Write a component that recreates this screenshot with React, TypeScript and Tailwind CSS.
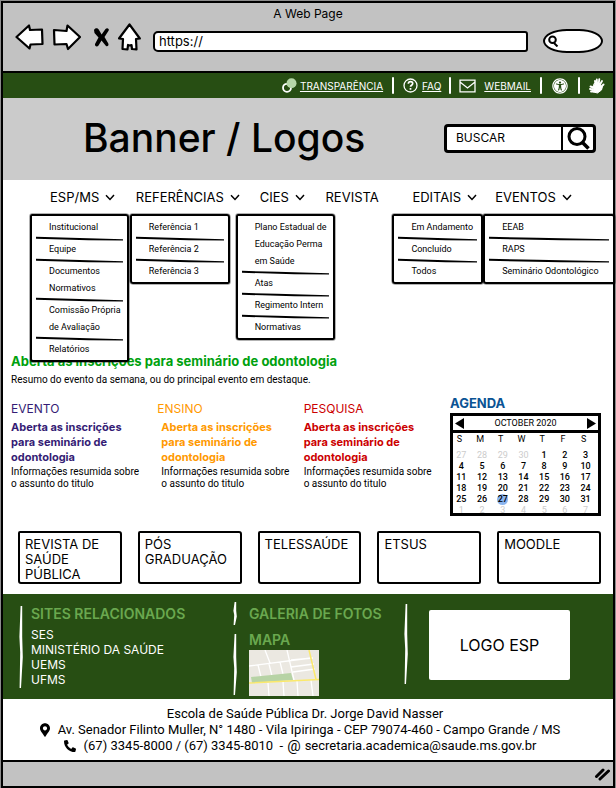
import React from "react";
import { FaMapMarkerAlt, FaPhoneAlt, FaUniversalAccess } from "react-icons/fa";

type Menu = {
  label: string;
  indent: string;
  menuWidth?: string;
  items?: string[][];
};

const menus: Menu[] = [
  {
    label: "ESP/MS",
    indent: "pl-5",
    menuWidth: "w-[99px]",
    items: [
      ["Institucional"],
      ["Equipe"],
      ["Documentos", "Normativos"],
      ["Comissão Própria", "de Avaliação"],
      ["Relatórios"],
    ],
  },
  {
    label: "REFERÊNCIAS",
    indent: "pl-1.5",
    menuWidth: "w-[100px]",
    items: [["Referência 1"], ["Referência 2"], ["Referência 3"]],
  },
  {
    label: "CIES",
    indent: "pl-6",
    menuWidth: "w-[99px]",
    items: [
      ["Plano Estadual de", "Educação Perma", "em Saúde"],
      ["Atas"],
      ["Regimento Intern"],
      ["Normativas"],
    ],
  },
  { label: "REVISTA", indent: "pl-0" },
  {
    label: "EDITAIS",
    indent: "pl-5",
    menuWidth: "w-[91px]",
    items: [["Em Andamento"], ["Concluído"], ["Todos"]],
  },
  {
    label: "EVENTOS",
    indent: "pl-3",
    menuWidth: "w-[132px]",
    items: [["EEAB"], ["RAPS"], ["Seminário Odontológico"]],
  },
];

const news = [
  { tag: "EVENTO", color: "text-[#351c75]", inset: "" },
  { tag: "ENSINO", color: "text-[#ff9900]", inset: "pl-1" },
  { tag: "PESQUISA", color: "text-[#cc0000]", inset: "" },
];

const weeks = [
  [27, 28, 29, 30, 1, 2, 3],
  [4, 5, 6, 7, 8, 9, 10],
  [11, 12, 13, 14, 15, 16, 17],
  [18, 19, 20, 21, 22, 23, 24],
  [25, 26, 27, 28, 29, 30, 31],
  [1, 2, 3, 4, 5, 6, 7],
];

const shortcuts = ["REVISTA DE SAÚDE PÚBLICA", "PÓS GRADUAÇÃO", "TELESSAÚDE", "ETSUS", "MOODLE"];

const sites = ["SES", "MINISTÉRIO DA SAÚDE", "UEMS", "UFMS"];

function Chevron() {
  return (
    <svg viewBox="0 0 10 7" className="h-[7px] w-2.5" fill="none" stroke="black" strokeWidth="1.5" aria-hidden>
      <path d="M1 1.2 5 5.4 9 1" />
    </svg>
  );
}

function MenuRule() {
  return (
    <svg viewBox="0 0 100 5" preserveAspectRatio="none" className="mx-1 block h-[5px] w-[calc(100%-8px)]" aria-hidden>
      <path d="M0 .8 40 1.800 100 3.200 100 4.600 60 4.200 0 2.8Z" fill="black" />
    </svg>
  );
}

function Stroke({ className }: { className: string }) {
  return (
    <svg viewBox="0 0 4 80" preserveAspectRatio="none" className={`block w-1 shrink-0 ${className}`} aria-hidden>
      <path d="M1.600 0 3.2 0 3.200 30 3.8 50 2 80 .6 80 1.2 45 .4 30Z" fill="white" />
    </svg>
  );
}

function Divider() {
  return <span className="h-[17px] w-0.5 shrink-0 rounded-full bg-white" />;
}

function BrowserBar() {
  return (
    <header className="flex h-[70px] flex-col border-b-2 border-black bg-[#c2c2c2]">
      <div className="mt-[3px] h-4 text-center text-[12px] leading-4">A Web Page</div>
      <div className="flex h-[30px] items-center pr-2.5 pl-3">
        <button type="button" aria-label="Voltar">
          <svg viewBox="0 0 29 28" className="h-7 w-[29px]" fill="white" stroke="black" strokeWidth="2.200" strokeLinejoin="round">
            <path d="M1.500 14 14 2.500l1 4.500 12-.5.5 14.500-12 .5-1 4Z" />
          </svg>
        </button>
        <button type="button" aria-label="Avançar" className="ml-2">
          <svg viewBox="0 0 29 28" className="h-7 w-[29px]" fill="white" stroke="black" strokeWidth="2.200" strokeLinejoin="round">
            <path d="M2 7 14.500 8 15.500 2.500 28 14 16 26l-1.500-5-12 .5Z" />
          </svg>
        </button>
        <button type="button" aria-label="Parar" className="ml-3">
          <svg viewBox="0 0 17 21" className="h-[21px] w-[17px]" fill="black">
            <path d="M1 3C2 .8 5 .8 6 3l2.600 4.500L12.500 2c1.500-1.600 4-.4 3.200 1.500L11.500 10l3.800 6.500c.8 2-.8 3.500-2.300 2.500L8.500 13.500 5.500 18.500c-1.200 1.800-4 1-3.500-1.500L5.500 10.500 1.500 6Z" />
          </svg>
        </button>
        <button type="button" aria-label="Início" className="ml-2">
          <svg viewBox="0 0 23 28" className="h-7 w-[23px]" fill="white" stroke="black" strokeWidth="2.200" strokeLinejoin="round">
            <path d="M11.500 1.500 21.800 15.500l-3.800.5.500 10.500-4.500-.5-.5-4-2 .5-1.500-.5-.5 4.500-5-.5.5-10-4-.5Z" />
          </svg>
        </button>
        <input
          aria-label="Endereço"
          defaultValue="https://"
          className="mt-2 ml-3 h-[21px] min-w-0 flex-1 rounded-[5px_3px_3px_5px] border-2 border-black bg-white pl-1 text-[13px] leading-4 outline-none"
        />
        <label className="mt-2 ml-[15px] flex h-6 w-[60px] items-center rounded-[24px/12px] border-2 border-black bg-white pl-0.5">
          <svg viewBox="0 0 12 12" className="h-3 w-3 shrink-0" fill="none" stroke="black" strokeWidth="2" aria-hidden>
            <circle cx="5.500" cy="4.800" r="3.300" />
            <path d="M7 8 10.500 11.500" />
          </svg>
          <input aria-label="Pesquisar na web" className="w-9 bg-transparent text-[11px] outline-none" />
        </label>
      </div>
    </header>
  );
}

function SigningHands() {
  return (
    <svg viewBox="0 0 16 16" className="h-4 w-4" fill="white" stroke="white" strokeLinecap="round" strokeLinejoin="round" aria-hidden>
      <path d="M6.500 6 6 3M8 5 7.800 1.500M9.800 5 10.300 1.200M11.300 6 13 3" strokeWidth="1.900" />
      <path d="M5.500 5.500 11 5.500 11.500 8 6 9.500 4.500 8.500Z" strokeWidth="1" />
      <path d="M4.500 9.500 1.500 8.500M4 11.500 1 11M5 13.500 2 13.500M12.500 8.500 14.500 6.500" strokeWidth="1.900" />
      <path d="M4.500 9 10 7.500 13.500 8.500 12.500 12 8.500 15 4.500 14Z" strokeWidth="1" />
    </svg>
  );
}

function TopLinks() {
  return (
    <div className="flex h-[25px] items-center justify-end bg-[#274e13] pr-2 text-[10px] leading-4 text-white">
      <svg viewBox="0 0 15 15" className="h-[15px] w-[15px]" aria-hidden>
        <circle cx="5" cy="9.800" r="4" fill="none" stroke="white" strokeWidth="1.800" />
        <circle cx="9.500" cy="5.200" r="5" fill="#b6d7a8" />
      </svg>
      <a href="#transparencia" className="mr-[9px] ml-[3px] underline">TRANSPARÊNCIA</a>
      <Divider />
      <svg viewBox="0 0 15 15" className="ml-[9px] h-[15px] w-[15px]" fill="none" stroke="white" strokeWidth="1.300" aria-hidden>
        <circle cx="7.500" cy="7.500" r="6.500" />
        <path d="M5.300 5.800c.2-3 4.400-2.800 4.400-.2 0 1.600-2.200 1.600-2.200 3.200M7.500 10v1.700" strokeWidth="1.700" />
      </svg>
      <a href="#faq" className="mr-2 ml-1 underline">FAQ</a>
      <Divider />
      <svg viewBox="0 0 17 14" className="ml-2 h-3.5 w-[17px]" fill="none" stroke="white" strokeWidth="1.300" aria-hidden>
        <path d="M1 1.200h15v11.600H1ZM1 3l7.500 6L16 3" />
      </svg>
      <a href="#webmail" className="mr-[9px] ml-2 underline">WEBMAIL</a>
      <Divider />
      <a href="#acessibilidade" aria-label="Acessibilidade" className="mx-2.5">
        <FaUniversalAccess className="h-4 w-4" />
      </a>
      <Divider />
      <a href="#libras" aria-label="Libras" className="ml-[9px]">
        <SigningHands />
      </a>
    </div>
  );
}

function Banner() {
  return (
    <div className="flex h-[82px] items-center justify-between bg-[#cbcbcb] pr-[17px] pb-0.5 pl-20">
      <h1 className="text-[39px] leading-[48px] font-medium">Banner / Logos</h1>
      <form className="flex h-[29px] w-[152px] rounded-sm border-[3px] border-black bg-white" onSubmit={(e) => e.preventDefault()}>
        <input
          aria-label="Buscar"
          placeholder="BUSCAR"
          className="min-w-0 flex-1 pl-[9px] text-[12px] leading-4 outline-none placeholder:text-black placeholder:opacity-100"
        />
        <button type="submit" aria-label="Buscar" className="flex w-8 items-center justify-center border-l-2 border-black">
          <svg viewBox="0 0 24 24" className="h-6 w-6" fill="none" stroke="black" strokeWidth="3">
            <circle cx="11" cy="10.500" r="8" />
            <path d="M16.500 16.500 22.500 22.500" strokeWidth="3.500" />
          </svg>
        </button>
      </form>
    </div>
  );
}

function Nav() {
  return (
    <nav className="bg-white pl-[27px]">
      <ul className="grid grid-cols-[100fr_106fr_90fr_67fr_91fr_130fr]">
        {menus.map((m) => (
          <li key={m.label} className="relative min-w-0">
            <button type="button" className={`flex h-[34px] items-center gap-1.5 text-[13px] leading-4 whitespace-nowrap ${m.indent}`}>
              {m.label}
              {m.items && <Chevron />}
            </button>
            {m.items && (
              <ul className={`absolute top-full left-0 z-10 rounded-[2px_3px_2px_3px] border-2 border-black bg-white pt-[3px] pb-0.5 font-[Roboto,sans-serif] outline outline-black/30 ${m.menuWidth}`}>
                {m.items.map((lines, i) => (
                  <li key={lines[0]}>
                    {i > 0 && <MenuRule />}
                    <a href="#menu" className="block pl-[17px] text-[9px] leading-[17px] whitespace-nowrap">
                      {lines.map((line) => (
                        <span key={line} className="block">{line}</span>
                      ))}
                    </a>
                  </li>
                ))}
              </ul>
            )}
          </li>
        ))}
      </ul>
    </nav>
  );
}

function Calendar() {
  return (
    <section className="w-[151px] shrink-0">
      <h2 className="text-[13px] leading-4 font-bold text-[#0b5394]">AGENDA</h2>
      <div className="mt-0.5 h-[103px] overflow-hidden border-[3px] border-black font-[Roboto,sans-serif]">
        <div className="flex h-[17px] items-center justify-between border-b-[3px] border-black px-0.5 text-[9px] leading-3">
          <button type="button" aria-label="Mês anterior">
            <svg viewBox="0 0 9 11" className="h-[11px] w-[9px]"><path d="M9 0v11L0 5.500Z" /></svg>
          </button>
          OCTOBER 2020
          <button type="button" aria-label="Próximo mês">
            <svg viewBox="0 0 9 11" className="h-[11px] w-[9px]"><path d="M0 0v11l9-5.500Z" /></svg>
          </button>
        </div>
        <table className="w-full table-fixed text-center text-[9px] leading-[11px]">
          <thead>
            <tr className="h-[17px] align-top">
              {["S", "M", "T", "W", "T", "F", "S"].map((d, i) => (
                <th key={i} className="pt-px pr-2 font-normal">{d}</th>
              ))}
            </tr>
          </thead>
          <tbody>
            {weeks.map((week, w) => (
              <tr key={w}>
                {week.map((day, d) => {
                  const outside = (w === 0 && day > 20) || w === 5;
                  const today = w === 4 && day === 27;
                  return (
                    <td key={d} className={outside ? "pr-1 text-[#cccccc]" : "pr-1 font-medium"}>
                      <span className={today ? "mx-auto block h-[11px] w-[11px] rounded-full bg-[#8ab4ee]" : "block"}>{day}</span>
                    </td>
                  );
                })}
              </tr>
            ))}
          </tbody>
        </table>
      </div>
    </section>
  );
}

function Content() {
  return (
    <main className="bg-white pt-[139px] pr-3 pb-2.5 pl-2">
      <h2 className="text-[13px] leading-4 font-bold text-[#00a10e]">
        Aberta as inscrições para seminário de odontologia
      </h2>
      <p className="mt-1 font-[Roboto,sans-serif] text-[10px] leading-[14px]">
        Resumo do evento da semana, ou do principal evento em destaque.
      </p>
      <div className="mt-2 flex">
        <div className="grid flex-1 grid-cols-3 pt-1.5">
          {news.map((n) => (
            <article key={n.tag}>
              <h3 className={`text-[12px] leading-4 ${n.color}`}>{n.tag}</h3>
              <div className={`max-w-[136px] ${n.inset}`}>
                <h4 className={`mt-[3px] text-[11px] leading-[15px] font-bold ${n.color}`}>
                  Aberta as inscrições para seminário de odontologia
                </h4>
                <p className="mt-px max-w-[130px] font-[Roboto,sans-serif] text-[10px] leading-3">
                  Informações resumida sobre o assunto do titulo
                </p>
              </div>
            </article>
          ))}
        </div>
        <Calendar />
      </div>
      <ul className="mt-[15px] ml-[7px] grid grid-cols-5 gap-4">
        {shortcuts.map((s) => (
          <li key={s}>
            <a href="#atalho" className="block h-[53px] rounded-[2px_3px_2px_3px] border-2 border-black px-[5px] pt-1 text-[13px] leading-[15px]">
              {s}
            </a>
          </li>
        ))}
      </ul>
    </main>
  );
}

function MapThumb() {
  return (
    <svg viewBox="0 0 70 46" className="h-[46px] w-[70px]" role="img" aria-label="Mapa">
      <rect width="70" height="46" fill="#ebe8e1" />
      <g fill="none" stroke="white" strokeWidth="1.300">
        <path d="M0 16 62 8M16 0l5 13M38 0l7 30M9 15l3 12M20 14l3 12M31 12l3 12M42 10l22-2M42 17l23-3M44 22l22-3M19 33l1 13M34 32l1 14M48 31l1 15M62 30l2 16" />
      </g>
      <path d="M2 27 42 23l2 7-41 3Z" fill="#b7d3a5" />
      <path d="M0 33 70 29.500M60 0l7 29.500" fill="none" stroke="#fbe96b" strokeWidth="1.500" />
    </svg>
  );
}

function Footer() {
  return (
    <footer>
      <div className="flex h-[105px] bg-[#274e13] pr-[43px] pl-4 text-white">
        <Stroke className="mt-3 h-[82px]" />
        <section className="ml-2 w-[200px] pt-3">
          <h2 className="text-[14px] leading-4 font-semibold text-[#6aa84f]">SITES RELACIONADOS</h2>
          <ul className="mt-[5px] text-[12px] leading-[15px]">
            {sites.map((s) => (
              <li key={s}>
                <a href="#site">{s}</a>
              </li>
            ))}
          </ul>
        </section>
        <div className="ml-0.5 flex flex-col gap-[9px] pt-2">
          <Stroke className="h-[23px]" />
          <Stroke className="h-[61px]" />
        </div>
        <section className="ml-3 w-[155px] pt-3">
          <h2 className="text-[14px] leading-4 font-semibold text-[#6aa84f]">GALERIA DE FOTOS</h2>
          <h2 className="mt-2.5 mb-0.5 text-[14px] leading-4 font-semibold text-[#6aa84f]">MAPA</h2>
          <MapThumb />
        </section>
        <Stroke className="mt-2.5 h-20" />
        <div className="mt-4 ml-auto flex h-[70px] w-[141px] items-center justify-center rounded-[2px] bg-white text-[16px] leading-5 text-black">
          LOGO ESP
        </div>
      </div>
      <address className="flex h-[61px] flex-col items-center bg-white pt-[7px] font-[Roboto,sans-serif] text-[13px] leading-4 whitespace-nowrap not-italic">
        <p className="pr-1.5">Escola de Saúde Pública Dr. Jorge David Nasser</p>
        <p className="flex items-center gap-1 pr-4">
          <FaMapMarkerAlt className="mr-1 h-3.5 w-2.5" />
          Av. Senador Filinto Muller, N° 1480 - Vila Ipiringa - CEP 79074-460 - Campo Grande / MS
        </p>
        <p className="flex items-center gap-1 pr-4">
          <FaPhoneAlt className="mr-1 h-3 w-3" />
          (67) 3345-8000 / (67) 3345-8010&nbsp; - <span className="text-[15px]">@</span>
          <a href="mailto:secretaria.academica@saude.ms.gov.br">secretaria.academica@saude.ms.gov.br</a>
        </p>
      </address>
      <div className="flex h-[26px] items-center justify-end border-t-2 border-black bg-[#c2c2c2] pr-0.5">
        <svg viewBox="0 0 17 14" className="h-3.5 w-[17px]" fill="none" stroke="black" strokeWidth="3" strokeLinecap="round" aria-hidden>
          <path d="M2.500 9.500 9 3M6 12 14.500 4" />
        </svg>
      </div>
    </footer>
  );
}

export default function App() {
  return (
    <div className="bg-[#8c8c8c] px-px py-px font-[Inter,sans-serif] text-black">
      <div className="border-2 border-black">
        <BrowserBar />
        <TopLinks />
        <Banner />
        <Nav />
        <Content />
        <Footer />
      </div>
    </div>
  );
}
